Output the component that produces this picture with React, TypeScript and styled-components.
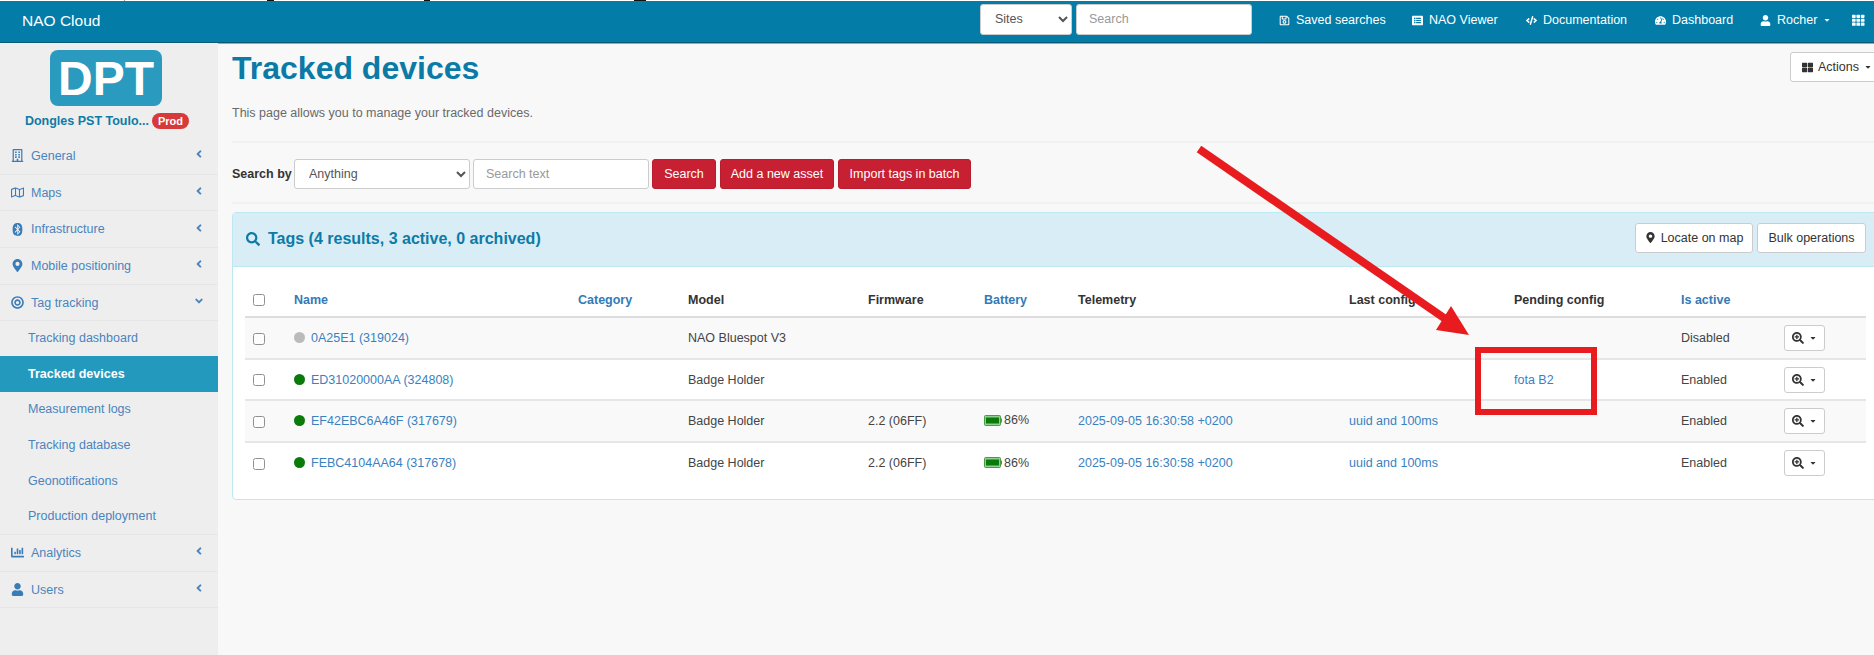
import React from "react";
import styled, { createGlobalStyle } from "styled-components";
import {
  FaRegBuilding, FaRegMap, FaBluetooth, FaMapMarkerAlt, FaBullseye, FaChartBar, FaUser,
  FaSearch, FaSearchPlus, FaThLarge, FaTh, FaRegSave, FaCode, FaTachometerAlt, FaListAlt,
  FaAngleLeft, FaAngleDown, FaCaretDown,
} from "react-icons/fa";

const Global = createGlobalStyle`
  html, body { margin: 0; padding: 0; background: #f8f8f8; }
  body { font-family: "Liberation Sans", Arial, sans-serif; font-size: 12.5px; color: #333; }
  * { box-sizing: border-box; }
`;

const Page = styled.div`
  position: relative;
  width: 1874px;
  height: 655px;
  overflow: hidden;
  display: flex;
  flex-direction: column;
`;
const TopStrip = styled.div`
  height: 1px;
  background: #fff;
  flex: none;
  display: flex;
`;
const Speck = styled.span<{ $gap: number; $w: number; $c: string }>`
  height: 1px;
  flex: none;
  margin-left: ${(p) => p.$gap}px;
  width: ${(p) => p.$w}px;
  background: ${(p) => p.$c};
`;
const TopBar = styled.header`
  height: 42px;
  flex: none;
  background: #037ca8;
  border-bottom: 1px solid #0b5a78;
  box-shadow: 0 1px 0 #9aa;
  display: flex;
  align-items: center;
  color: #fff;
`;
const Brand = styled.div`
  font-size: 15.5px;
  margin: -2px 0 0 22px;
  width: 958px;
  flex: none;
`;
const NavSelect = styled.select`
  width: 92px;
  height: 31px;
  border: 1px solid #ccc;
  border-radius: 3px;
  background: #fff;
  color: #555;
  font: 12.5px "Liberation Sans", sans-serif;
  padding-left: 10px;
  margin-top: -5px;
`;
const NavInput = styled.input`
  width: 176px;
  height: 31px;
  border: 1px solid #ccc;
  border-radius: 3px;
  margin: -5px 0 0 4px;
  padding: 0 12px;
  font: 12.5px "Liberation Sans", sans-serif;
  &::placeholder { color: #999; }
`;
const NavLinks = styled.nav`
  display: flex;
  align-items: center;
  margin: -3px 0 0 27px;
`;
const NavLink = styled.a<{ $w: number }>`
  width: ${(p) => p.$w}px;
  flex: none;
  display: flex;
  align-items: center;
  gap: 6px;
  font-size: 12.5px;
  color: #fff;
  svg { flex: none; font-size: 11px; }
`;
const GridLink = styled.a`
  flex: none;
  color: #fff;
  display: flex;
  font-size: 12.5px;
`;
const Body = styled.div`
  display: flex;
  flex: 1;
  min-height: 0;
`;
const Sidebar = styled.aside`
  width: 218px;
  flex: none;
  background: #eee;
  display: flex;
  flex-direction: column;
`;
const LogoWrap = styled.div`
  display: flex;
  flex-direction: column;
  align-items: center;
  padding-top: 7px;
  margin-bottom: 2px;
`;
const Logo = styled.div`
  width: 112px;
  height: 56px;
  margin-right: 6px;
  background: #2a9bbf;
  border-radius: 8px;
  color: #fff;
  font-size: 48px;
  font-weight: 700;
  display: flex;
  align-items: center;
  justify-content: center;
`;
const SiteName = styled.div`
  display: flex;
  align-items: center;
  justify-content: center;
  height: 30px;
  color: #0d7ba6;
  font-weight: 700;
  font-size: 12.5px;
  width: 100%;
  padding-right: 4px;
`;
const Badge = styled.span`
  background: #d73a3a;
  color: #fff;
  font-size: 11px;
  font-weight: 700;
  border-radius: 9px;
  padding: 2px 6px;
  margin-left: 3px;
`;
const MenuItem = styled.div`
  height: 36.7px;
  display: flex;
  align-items: center;
  color: #4a84bd;
  font-size: 12.5px;
  border-bottom: 1px solid #e6e6e6;
  padding: 0 0 0 6px;
`;
const MenuIcon = styled.span`
  width: 22px;
  flex: none;
  display: flex;
  justify-content: center;
  margin-right: 3px;
  color: #3a7cb8;
  font-size: 13px;
`;
const MenuLabel = styled.span`
  flex: 1;
`;
const Chevron = styled.span`
  width: 25px;
  flex: none;
  font-size: 12px;
  display: flex;
  color: #4a84bd;
  margin-top: -3px;
`;
const SubMenu = styled.div`
  border-bottom: 1px solid #e6e6e6;
  margin-top: -1px;
`;
const SubItem = styled.div<{ $active?: boolean }>`
  height: 35.6px;
  display: flex;
  align-items: center;
  padding-left: 28px;
  font-size: 12.5px;
  color: ${(p) => (p.$active ? "#fff" : "#4a84bd")};
  background: ${(p) => (p.$active ? "#2399bd" : "transparent")};
  font-weight: ${(p) => (p.$active ? 700 : 400)};
`;
const Main = styled.main`
  position: relative;
  flex: 1;
  min-width: 0;
  padding: 0 0 0 14px;
`;
const TitleRow = styled.div`
  display: flex;
  justify-content: space-between;
  align-items: flex-start;
  height: 92px;
`;
const H1 = styled.h1`
  margin: 7px 0 0;
  font-size: 32px;
  line-height: 36px;
  font-weight: 700;
  color: #0b7aa6;
`;
const ActionsBtn = styled.button`
  width: 92px;
  height: 30px;
  flex: none;
  margin: 9px -8px 0 0;
  background: #fff;
  border: 1px solid #ccc;
  border-radius: 3px;
  font: 12.5px "Liberation Sans", sans-serif;
  color: #333;
  display: flex;
  align-items: center;
  gap: 5px;
  padding: 0 0 0 11px;
  svg { font-size: 11px; }
`;
const Intro = styled.p`
  margin: -33px 0 0;
  height: 39px;
  color: #676a6c;
  font-size: 12.5px;
  line-height: 15px;
  padding-top: 4px;
`;
const Rule = styled.div`
  height: 2px;
  background: #f1f1f1;
`;
const SearchRow = styled.div`
  display: flex;
  align-items: center;
  height: 59px;
  padding-top: 3px;
`;
const SearchLabel = styled.label`
  font-weight: 700;
  font-size: 12.5px;
  color: #333;
  width: 62px;
  flex: none;
  white-space: nowrap;
`;
const SearchSelect = styled.select`
  width: 176px;
  height: 30px;
  border: 1px solid #ccc;
  border-radius: 3px;
  background: #fff;
  color: #555;
  font: 12.5px "Liberation Sans", sans-serif;
  padding-left: 10px;
`;
const SearchInput = styled.input`
  width: 176px;
  height: 30px;
  border: 1px solid #ccc;
  border-radius: 3px;
  margin: 0 -1px 0 3px;
  padding: 0 12px;
  font: 12.5px "Liberation Sans", sans-serif;
  &::placeholder { color: #999; }
`;
const RedBtn = styled.button<{ $w: number }>`
  width: ${(p) => p.$w}px;
  height: 30px;
  margin-left: 4px;
  background: #c82033;
  color: #fff;
  border: 1px solid #b81c2e;
  border-radius: 3px;
  padding: 0;
  font: 12.5px "Liberation Sans", sans-serif;
`;
const Panel = styled.section`
  margin: 8px -30px 0 0;
  height: 288px;
  background: #fff;
  border: 1px solid #bce8f1;
  border-radius: 4px;
`;
const PanelHead = styled.div`
  height: 54px;
  background: #d9edf7;
  border-bottom: 1px solid #bce8f1;
  display: flex;
  align-items: center;
  padding: 0 37px 0 13px;
`;
const PanelTitle = styled.div`
  flex: 1;
  display: flex;
  align-items: center;
  gap: 8px;
  margin-top: -1px;
  color: #0d7ba6;
  font-weight: 700;
  font-size: 16px;
  svg { font-size: 14px; }
`;
const HeadBtn = styled.button<{ $w: number }>`
  width: ${(p) => p.$w}px;
  height: 30px;
  margin: -4px 0 0 4px;
  background: #fff;
  border: 1px solid #ccc;
  border-radius: 3px;
  color: #333;
  font: 12.5px "Liberation Sans", sans-serif;
  display: flex;
  align-items: center;
  justify-content: center;
  gap: 5px;
  padding: 0;
  svg { font-size: 11px; }
`;
const Table = styled.table`
  width: 1621px;
  margin: 2px 0 0 12px;
  table-layout: fixed;
  border-collapse: collapse;
  font-size: 12.5px;
  th, td { padding: 0 7px; text-align: left; white-space: nowrap; }
  th { height: 48px; font-weight: 700; color: #333; border-bottom: 2px solid #ddd; padding-top: 14px; }
  td { height: 41.7px; border-bottom: 2px solid #e6e6e6; color: #444; }
  tbody tr:nth-child(odd) { background: #f9f9f9; }
  tbody tr:last-child td { border-bottom: none; }
`;
const SortLink = styled.a`
  color: #337ab7;
`;
const RowLink = styled.a`
  color: #3a81bf;
`;
const Dot = styled.span<{ $on: boolean }>`
  display: inline-block;
  width: 11px;
  height: 11px;
  border-radius: 50%;
  background: ${(p) => (p.$on ? "#0a7a0a" : "#bbb")};
  margin-right: 6px;
  vertical-align: -1px;
`;
const Check = styled.input`
  margin: 0 0 0 1px;
  width: 12px;
  height: 12px;
  vertical-align: middle;
  opacity: 0.8;
`;
const Battery = styled.span`
  display: inline-flex;
  align-items: center;
  gap: 2px;
  svg { display: block; }
`;
const ZoomBtn = styled.button`
  width: 41px;
  height: 26px;
  background: #fff;
  border: 1px solid #ccc;
  border-radius: 3px;
  padding: 0;
  color: #333;
  display: flex;
  align-items: center;
  justify-content: center;
  gap: 5px;
  font-size: 12px;
`;
const Annotation = styled.svg`
  position: absolute;
  left: 0;
  top: 0;
  pointer-events: none;
`;

const menuTop = [
  { icon: <FaRegBuilding />, label: "General" },
  { icon: <FaRegMap />, label: "Maps" },
  { icon: <FaBluetooth />, label: "Infrastructure" },
  { icon: <FaMapMarkerAlt />, label: "Mobile positioning" },
];
const subs = ["Tracking dashboard", "Tracked devices", "Measurement logs", "Tracking database", "Geonotifications", "Production deployment"];

const rows = [
  { on: false, name: "0A25E1 (319024)", model: "NAO Bluespot V3", state: "Disabled" },
  { on: true, name: "ED31020000AA (324808)", model: "Badge Holder", pending: "fota B2", state: "Enabled" },
  { on: true, name: "EF42EBC6A46F (317679)", model: "Badge Holder", fw: "2.2 (06FF)", bat: "86%", tele: "2025-09-05 16:30:58 +0200", last: "uuid and 100ms", state: "Enabled" },
  { on: true, name: "FEBC4104AA64 (317678)", model: "Badge Holder", fw: "2.2 (06FF)", bat: "86%", tele: "2025-09-05 16:30:58 +0200", last: "uuid and 100ms", state: "Enabled" },
];
const cols = [42, 284, 110, 180, 116, 94, 271, 165, 167, 103, 89];

function Bat() {
  return (
    <svg width="18" height="11" viewBox="0 0 18 11">
      <rect x="0.5" y="0.5" width="16" height="10" rx="1" fill="#8fcf8f" stroke="#4a9a4a" />
      <rect x="2" y="2.5" width="13" height="6" fill="#0a7a0a" />
      <rect x="17" y="3.5" width="1" height="4" fill="#4a9a4a" />
    </svg>
  );
}

export default function App() {
  return (
    <Page>
      <Global />
      <TopStrip>
        <Speck $gap={124} $w={1} $c="#999" />
        <Speck $gap={142} $w={7} $c="#111" />
        <Speck $gap={150} $w={6} $c="#111" />
        <Speck $gap={204} $w={12} $c="#111" />
      </TopStrip>
      <TopBar>
        <Brand>NAO Cloud</Brand>
        <NavSelect defaultValue="Sites"><option>Sites</option></NavSelect>
        <NavInput placeholder="Search" />
        <NavLinks>
          <NavLink $w={133}><FaRegSave />Saved searches</NavLink>
          <NavLink $w={114}><FaListAlt />NAO Viewer</NavLink>
          <NavLink $w={129}><FaCode />Documentation</NavLink>
          <NavLink $w={105}><FaTachometerAlt />Dashboard</NavLink>
          <NavLink $w={92}><FaUser />Rocher <FaCaretDown style={{ fontSize: 8 }} /></NavLink>
          <GridLink><FaTh /></GridLink>
        </NavLinks>
      </TopBar>
      <Body>
        <Sidebar>
          <LogoWrap>
            <Logo>DPT</Logo>
            <SiteName>Dongles PST Toulo...<Badge>Prod</Badge></SiteName>
          </LogoWrap>
          {menuTop.map((m) => (
            <MenuItem key={m.label}>
              <MenuIcon>{m.icon}</MenuIcon>
              <MenuLabel>{m.label}</MenuLabel>
              <Chevron><FaAngleLeft /></Chevron>
            </MenuItem>
          ))}
          <MenuItem>
            <MenuIcon><FaBullseye /></MenuIcon>
            <MenuLabel>Tag tracking</MenuLabel>
            <Chevron><FaAngleDown /></Chevron>
          </MenuItem>
          <SubMenu>
            {subs.map((s) => (
              <SubItem key={s} $active={s === "Tracked devices"}>{s}</SubItem>
            ))}
          </SubMenu>
          <MenuItem>
            <MenuIcon><FaChartBar /></MenuIcon>
            <MenuLabel>Analytics</MenuLabel>
            <Chevron><FaAngleLeft /></Chevron>
          </MenuItem>
          <MenuItem>
            <MenuIcon><FaUser /></MenuIcon>
            <MenuLabel>Users</MenuLabel>
            <Chevron><FaAngleLeft /></Chevron>
          </MenuItem>
        </Sidebar>
        <Main>
          <TitleRow>
            <H1>Tracked devices</H1>
            <ActionsBtn><FaThLarge />Actions <FaCaretDown style={{ fontSize: 8 }} /></ActionsBtn>
          </TitleRow>
          <Intro>This page allows you to manage your tracked devices.</Intro>
          <Rule />
          <SearchRow>
            <SearchLabel>Search by</SearchLabel>
            <SearchSelect defaultValue="Anything"><option>Anything</option></SearchSelect>
            <SearchInput placeholder="Search text" />
            <RedBtn $w={64}>Search</RedBtn>
            <RedBtn $w={114}>Add a new asset</RedBtn>
            <RedBtn $w={133}>Import tags in batch</RedBtn>
          </SearchRow>
          <Rule />
          <Panel>
            <PanelHead>
              <PanelTitle><FaSearch />Tags (4 results, 3 active, 0 archived)</PanelTitle>
              <HeadBtn $w={118}><FaMapMarkerAlt />Locate on map</HeadBtn>
              <HeadBtn $w={109}>Bulk operations</HeadBtn>
            </PanelHead>
            <Table>
              <colgroup>
                {cols.map((c, i) => <col key={i} style={{ width: c }} />)}
              </colgroup>
              <thead>
                <tr>
                  <th><Check type="checkbox" /></th>
                  <th><SortLink>Name</SortLink></th>
                  <th><SortLink>Category</SortLink></th>
                  <th>Model</th>
                  <th>Firmware</th>
                  <th><SortLink>Battery</SortLink></th>
                  <th>Telemetry</th>
                  <th>Last config</th>
                  <th>Pending config</th>
                  <th><SortLink>Is active</SortLink></th>
                  <th />
                </tr>
              </thead>
              <tbody>
                {rows.map((r) => (
                  <tr key={r.name}>
                    <td><Check type="checkbox" /></td>
                    <td><Dot $on={r.on} /><RowLink>{r.name}</RowLink></td>
                    <td />
                    <td>{r.model}</td>
                    <td>{r.fw}</td>
                    <td>{r.bat && <Battery><Bat />{r.bat}</Battery>}</td>
                    <td><RowLink>{r.tele}</RowLink></td>
                    <td><RowLink>{r.last}</RowLink></td>
                    <td><RowLink>{r.pending}</RowLink></td>
                    <td>{r.state}</td>
                    <td><ZoomBtn><FaSearchPlus /><FaCaretDown style={{ fontSize: 8 }} /></ZoomBtn></td>
                  </tr>
                ))}
              </tbody>
            </Table>
          </Panel>
        </Main>
      </Body>
      <Annotation width="1874" height="655" viewBox="0 0 1874 655">
        <line x1="1199" y1="149" x2="1447" y2="320" stroke="#e81c1f" strokeWidth="8" />
        <polygon points="1469,335 1451,306 1436,330" fill="#e81c1f" />
        <rect x="1478" y="350" width="116" height="62" fill="none" stroke="#e81c1f" strokeWidth="6" />
      </Annotation>
    </Page>
  );
}
